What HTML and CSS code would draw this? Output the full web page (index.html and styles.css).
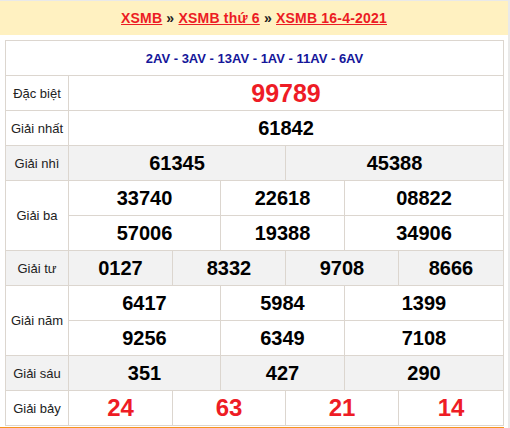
FILE: index.html
```html
<!DOCTYPE html>
<html lang="vi">
<head>
<meta charset="utf-8">
<title>XSMB 16-4-2021</title>
<link rel="stylesheet" href="styles.css">
</head>
<body>
<div class="page">
  <div class="crumbs">
    <p class="crumb-line"><a href="#">XSMB</a> <span class="sep">»</span> <a href="#">XSMB thứ 6</a> <span class="sep">»</span> <a href="#">XSMB 16-4-2021</a></p>
  </div>
  <div class="results">
    <div class="cell codes span-all">2AV - 3AV - 13AV - 1AV - 11AV - 6AV</div>

    <div class="cell label">Đặc biệt</div>
    <div class="cell num special span-vals">99789</div>

    <div class="cell label">Giải nhất</div>
    <div class="cell num span-vals">61842</div>

    <div class="cell label alt">Giải nhì</div>
    <div class="cell num alt c2-5">61345</div>
    <div class="cell num alt c5-8">45388</div>

    <div class="cell label rows2">Giải ba</div>
    <div class="cell num c2-4">33740</div>
    <div class="cell num c4-6">22618</div>
    <div class="cell num c6-8">08822</div>
    <div class="cell num c2-4">57006</div>
    <div class="cell num c4-6">19388</div>
    <div class="cell num c6-8">34906</div>

    <div class="cell label alt">Giải tư</div>
    <div class="cell num alt c2-3">0127</div>
    <div class="cell num alt c3-5">8332</div>
    <div class="cell num alt c5-7">9708</div>
    <div class="cell num alt c7-8">8666</div>

    <div class="cell label rows2">Giải năm</div>
    <div class="cell num c2-4">6417</div>
    <div class="cell num c4-6">5984</div>
    <div class="cell num c6-8">1399</div>
    <div class="cell num c2-4">9256</div>
    <div class="cell num c4-6">6349</div>
    <div class="cell num c6-8">7108</div>

    <div class="cell label alt">Giải sáu</div>
    <div class="cell num alt c2-4">351</div>
    <div class="cell num alt c4-6">427</div>
    <div class="cell num alt c6-8">290</div>

    <div class="cell label">Giải bảy</div>
    <div class="cell num red c2-3">24</div>
    <div class="cell num red c3-5">63</div>
    <div class="cell num red c5-7">21</div>
    <div class="cell num red c7-8">14</div>
  </div>
  <div class="next"></div>
</div>
</body>
</html>
```

FILE: styles.css
```css
html, body {
  margin: 0;
  padding: 0;
}
body {
  background: #e9e9e9;
  font-family: "Liberation Sans", Arial, sans-serif;
  padding-top: 1px;
}
.page {
  width: 508px;
  background: #ffffff;
  height: 427px;
  overflow: hidden;
}
.crumbs {
  background: #fff1c1;
  height: 34px;
  display: flex;
  align-items: center;
  justify-content: center;
  font-size: 14px;
  font-weight: bold;
  color: #333;
}
.crumb-line {
  margin: 0;
  letter-spacing: 0.2px;
}
.crumbs a {
  color: #ec1c24;
  text-decoration: underline;
}
.sep {
  color: #222;
}
.results {
  margin: 5px 4px 0 5px;
  display: grid;
  grid-template-columns: 62px 103px 47px 64px 58px 53px 104px;
  grid-auto-rows: 34px;
  gap: 1px;
  padding: 1px;
  background: #dcd6cf;
}
.cell {
  background: #ffffff;
  display: flex;
  align-items: center;
  justify-content: center;
}
.cell.alt {
  background: #f2f2f2;
}
.codes {
  color: #15169a;
  font-size: 13px;
  font-weight: bold;
}
.label {
  font-size: 13px;
  color: #222;
  white-space: nowrap;
}
.num {
  font-size: 20px;
  font-weight: bold;
  color: #000;
}
.special {
  font-size: 25px;
  color: #ee1c25;
}
.red {
  font-size: 24px;
  color: #ee1c25;
}
.span-all { grid-column: 1 / -1; }
.span-vals { grid-column: 2 / 8; }
.rows2 { grid-row: span 2; }
.c2-5 { grid-column: 2 / 5; }
.c5-8 { grid-column: 5 / 8; }
.c2-4 { grid-column: 2 / 4; }
.c4-6 { grid-column: 4 / 6; }
.c6-8 { grid-column: 6 / 8; }
.c2-3 { grid-column: 2 / 3; }
.c3-5 { grid-column: 3 / 5; }
.c5-7 { grid-column: 5 / 7; }
.c7-8 { grid-column: 7 / 8; }
.next {
  margin-top: 1px;
  margin-right: 4px;
  border-top: 3px solid #f7941d;
}
```
